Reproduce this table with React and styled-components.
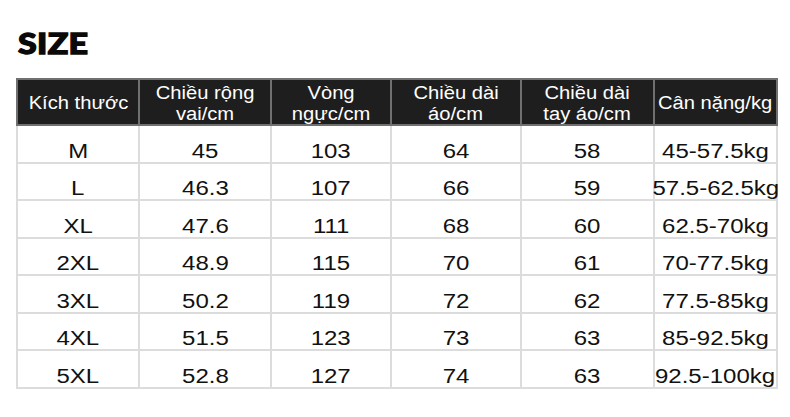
import React from "react";
import styled, { createGlobalStyle } from "styled-components";

const Global = createGlobalStyle`
  html, body { margin: 0; padding: 0; background: #ffffff; }
  body { font-family: "Liberation Sans", Arial, sans-serif; color: #111; }
`;

const Page = styled.div`
  width: 790px;
  height: 417px;
  padding: 28px 0 0 16px;
  box-sizing: border-box;
  overflow: hidden;
`;

const Title = styled.h1`
  margin: 0 0 21px 2px;
  font-family: "Lato", "Liberation Sans", sans-serif;
  font-weight: 900;
  font-size: 29px;
  line-height: 29px;
  letter-spacing: 0.3px;
  color: #0a0a0a;
  -webkit-text-stroke: 1.3px #0a0a0a;
  transform: scaleX(1.17);
  transform-origin: left center;
`;

const Table = styled.table`
  border-collapse: collapse;
  table-layout: fixed;
  width: 760px;
`;

const HeadCell = styled.th`
  background: #1e1e1e;
  color: #ffffff;
  border: 2px solid #707070;
  font-weight: normal;
  font-size: 18px;
  line-height: 20.5px;
  height: 44px;
  padding: 3px 0 0;
  vertical-align: middle;
  text-align: center;
  box-sizing: border-box;
`;

const Cell = styled.td`
  border: 2px solid #dcdcdc;
  font-size: 20px;
  line-height: 20px;
  height: 37.5px;
  padding: 0 0 1px;
  vertical-align: bottom;
  text-align: center;
  color: #111;
  box-sizing: border-box;
`;

const Stretch = styled.span`
  display: inline-block;
  white-space: nowrap;
  transform: scaleX(${(p) => p.$sx || 1.2});
`;

const cols = [122, 132, 120, 130, 133, 123];

const headers = [
  ["Kích thước"],
  ["Chiều rộng", "vai/cm"],
  ["Vòng", "ngực/cm"],
  ["Chiều dài", "áo/cm"],
  ["Chiều dài", "tay áo/cm"],
  ["Cân nặng/kg"],
];

const rows = [
  ["M", "45", "103", "64", "58", "45-57.5kg"],
  ["L", "46.3", "107", "66", "59", "57.5-62.5kg"],
  ["XL", "47.6", "111", "68", "60", "62.5-70kg"],
  ["2XL", "48.9", "115", "70", "61", "70-77.5kg"],
  ["3XL", "50.2", "119", "72", "62", "77.5-85kg"],
  ["4XL", "51.5", "123", "73", "63", "85-92.5kg"],
  ["5XL", "52.8", "127", "74", "63", "92.5-100kg"],
];

export default function App() {
  return (
    <Page>
      <Global />
      <Title>SIZE</Title>
      <Table>
        <colgroup>
          {cols.map((w, i) => (
            <col key={i} style={{ width: w }} />
          ))}
        </colgroup>
        <thead>
          <tr>
            {headers.map((lines, i) => (
              <HeadCell key={i}>
                {lines.map((l, j) => (
                  <React.Fragment key={j}>
                    {j > 0 && <br />}
                    <Stretch $sx={1.12}>{l}</Stretch>
                  </React.Fragment>
                ))}
              </HeadCell>
            ))}
          </tr>
        </thead>
        <tbody>
          {rows.map((r, i) => (
            <tr key={i}>
              {r.map((v, j) => (
                <Cell key={j}>
                  <Stretch>{v}</Stretch>
                </Cell>
              ))}
            </tr>
          ))}
        </tbody>
      </Table>
    </Page>
  );
}
